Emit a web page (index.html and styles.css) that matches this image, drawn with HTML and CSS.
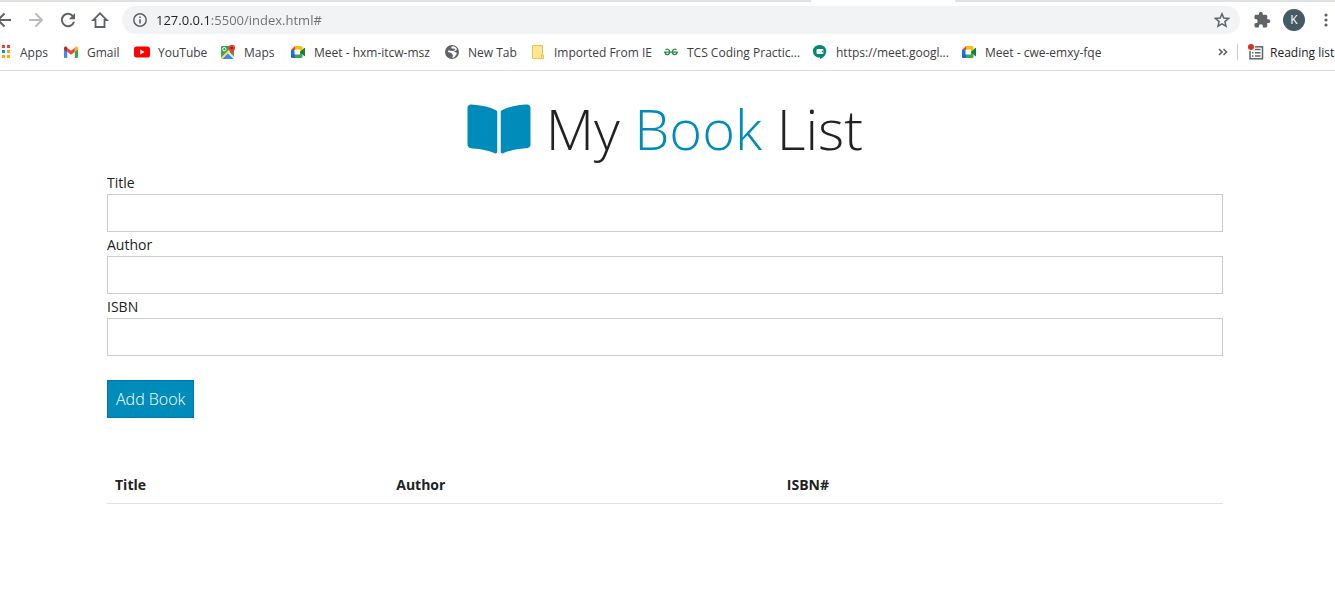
FILE: index.html
```html
<!DOCTYPE html>
<html lang="en">
<head>
<meta charset="utf-8">
<title>My Book List</title>
<link rel="stylesheet" href="styles.css">
</head>
<body>
<svg class="sprite" aria-hidden="true">
  <symbol id="meet" viewBox="0 0 16 14">
    <path fill="#ea4335" d="M1 5 5 1v4z"/>
    <path fill="#fbbc04" d="M5 1h6q1.500 0 1.500 1.500V6L10 7V4.500H5z"/>
    <path fill="#1a73e8" d="M1 5h3.500v5H1z"/>
    <path fill="#1967d2" d="M1 9.500h4V13H2q-1 0-1-1z"/>
    <path fill="#34a853" d="M5 9.500h5V7l2.500-2v6.500q0 1.500-1.500 1.500H5z"/>
    <path fill="#188038" d="m10 7 4.200-4q.8-.5.8.4v7.200q0 .9-.8.400z"/>
  </symbol>
</svg>
<header class="browser">
  <div class="tabs"><span class="tab-active"></span></div>
  <div class="toolbar">
    <button class="tool" aria-label="Back"><svg width="16" height="16" viewBox="0 0 16 16" fill="none" stroke="#5f6368" stroke-width="2"><path d="M15 8H2M8.500 1.500 2 8l6.500 6.500"/></svg></button>
    <button class="tool" aria-label="Forward"><svg width="16" height="16" viewBox="0 0 16 16" fill="none" stroke="#babcbe" stroke-width="2"><path d="M1 8h13M7.500 1.500 14 8l-6.500 6.500"/></svg></button>
    <button class="tool" aria-label="Reload"><svg width="16" height="16" viewBox="0 0 16 16"><path d="M13.200 4.500A6.200 6.200 0 1 0 14 9.700" fill="none" stroke="#5f6368" stroke-width="2"/><path d="M15 1v6.200H8.800z" fill="#5f6368"/></svg></button>
    <button class="tool" aria-label="Home"><svg width="18" height="18" viewBox="0 0 18 18" fill="none" stroke="#5f6368" stroke-width="1.800"><path d="M4.500 9H2.200L9 2.300 15.800 9h-2.300v7h-9z"/></svg></button>
    <div class="address">
      <svg width="14" height="14" viewBox="0 0 14 14"><circle cx="7" cy="7" r="6.200" fill="none" stroke="#5f6368" stroke-width="1.500"/><path d="M6.200 6.200h1.600v4.300H6.200zM6.200 3.400h1.600V5H6.200z" fill="#5f6368"/></svg>
      <input class="url" type="text" aria-label="Address" value="127.0.0.1:5500/index.html#">
      <button class="star" aria-label="Bookmark this page"><svg width="16" height="16" viewBox="0 0 16 16" fill="none" stroke="#5f6368" stroke-width="1.500"><path d="m8 1.800 1.800 4.300 4.700.4-3.600 3.100 1.100 4.600L8 11.800l-4 2.400 1.100-4.600-3.600-3.100 4.700-.4z"/></svg></button>
    </div>
    <button class="tool" aria-label="Extensions"><svg width="18" height="18" viewBox="0 0 24 24" fill="#5f6368"><path d="M20.500 11H19V7c0-1.100-.9-2-2-2h-4V3.500a2.500 2.500 0 0 0-5 0V5H4c-1.100 0-2 .9-2 2v3.800h1.500a2.700 2.700 0 0 1 0 5.400H2V20c0 1.100.9 2 2 2h3.800v-1.500a2.700 2.700 0 0 1 5.400 0V22H17c1.100 0 2-.9 2-2v-4h1.500a2.500 2.500 0 0 0 0-5z"/></svg></button>
    <button class="tool" aria-label="Profile"><span class="avatar">K</span></button>
    <button class="tool" aria-label="Menu"><svg width="16" height="16" viewBox="0 0 16 16" fill="#5f6368"><circle cx="8" cy="3" r="1.600"/><circle cx="8" cy="8" r="1.600"/><circle cx="8" cy="13" r="1.600"/></svg></button>
  </div>
  <nav class="bookmarks">
    <div class="links">
      <a href="#"><svg width="16" height="16" viewBox="0 0 16 16"><path fill="#ea4335" d="M1 1h3v3H1zM6 1h3v3H6zM11 1h3v3h-3z"/><path fill="#1a84ff" d="M6 6h3v3H6z"/><path fill="#34a853" d="M1 6h3v3H1z"/><path fill="#fbab00" d="M11 6h3v3h-3zM1 11h3v3H1zM6 11h3v3H6zM11 11h3v3h-3z"/></svg>Apps</a>
      <a href="#"><svg width="16" height="16" viewBox="0 0 16 16"><path fill="#4285f4" d="M1 4.500 4.200 7v7H2q-1 0-1-1z"/><path fill="#34a853" d="M15 4.500 11.800 7v7H14q1 0 1-1z"/><path fill="#ea4335" d="M4.200 3.800 8 6.700l3.800-2.900v4L8 10.700 4.200 7.800z"/><path fill="#c5221f" d="M1 4.200c0-1.700 1.700-2.200 2.700-1.400l.5.400v4.600L1 5.500z"/><path fill="#fbbc04" d="M15 4.200c0-1.700-1.700-2.200-2.700-1.400l-.5.400v4.600L15 5.500z"/></svg>Gmail</a>
      <a href="#"><svg width="16" height="16" viewBox="0 0 16 16"><rect y="2.500" width="16" height="11" rx="2.500" fill="#f00"/><path d="m6.300 5.500 4.300 2.500-4.300 2.500z" fill="#fff"/></svg>YouTube</a>
      <a href="#"><svg width="16" height="16" viewBox="0 0 16 16"><rect x="1" y="2" width="13" height="13" rx="1" fill="#34a853"/><path d="m2 15 5.500-5.500L13 15z" fill="#4285f4"/><path d="M1 13.500 12 2.500l2 2L3.500 15H1z" fill="#fdd663"/><path d="m2.500 15 5.500-5.500 5.500 5.500z" fill="#4285f4"/><path d="m8 9.500 1.500-1.500L14 12.500V15h-.5z" fill="#e8eaed"/><circle cx="4.300" cy="5.200" r="1.700" fill="none" stroke="#fff" stroke-width="1"/><path d="M11.700 10.500C11.200 8 8.500 7 8.500 4a3.300 3.300 0 0 1 6.600 0c0 3-2.900 4-3.400 6.500z" fill="#ea4335"/><circle cx="11.800" cy="4" r="1.200" fill="#8c1d18"/></svg>Maps</a>
      <a href="#"><svg width="16" height="14"><use href="#meet"/></svg>Meet - hxm-itcw-msz</a>
      <a href="#"><svg width="16" height="16" viewBox="0 0 16 16"><circle cx="8" cy="8" r="7" fill="#5f6368"/><path d="M9.500 2.200C7 2 6.500 4 8 4.500l3 .2c1 1-1 2.300-2.500 2.300-2 0-3-.6-4.500-.3-.6 1.700 1.300 1.800 2.800 2 1.200.2.7 1.500 1.700 1.900.8.300.5 1.700-.5 3.300 3-.3 3.500-2.400 4.700-4.200.8-1.400-2-1.700-3.200-2 1.500-.6 3-1.400 3.500-2.500-.6-1.500-2-2.700-3.500-3z" fill="#fff"/></svg>New Tab</a>
      <a href="#"><svg width="16" height="16" viewBox="0 0 16 16"><path d="M2.500 1.500h10v9.500h-1v3.500h-9z" fill="#ffe694" stroke="#e8c44e"/><path d="M11.500 11h2v3.500h-2z" fill="#ffe694" stroke="#e8c44e"/></svg>Imported From IE</a>
      <a href="#"><svg width="16" height="16" viewBox="0 0 16 16" fill="none" stroke="#2f8d46" stroke-width="1.300"><path d="M1 8.200h14M2.500 5.700C4.500 4.600 6.700 5.500 6.700 8c0 3.200-4 3.500-4.900.3M13.500 5.700C11.500 4.600 9.300 5.500 9.300 8c0 3.200 4 3.500 4.900.3"/></svg>TCS Coding Practic...</a>
      <a href="#"><svg width="16" height="16" viewBox="0 0 16 16"><path d="M8 1a6.300 6.300 0 0 1 6.300 6.300c0 3-2.300 6-6.300 8v-1.800A6.300 6.300 0 1 1 8 1z" fill="#00897b"/><rect x="4.500" y="5" width="7" height="5" rx="1" fill="#fff"/><path d="m9.500 7.500 2-1.600v3.200z" fill="#00897b"/></svg>https://meet.googl...</a>
      <a href="#"><svg width="16" height="14"><use href="#meet"/></svg>Meet - cwe-emxy-fqe</a>
    </div>
    <button class="more" aria-label="More bookmarks"><svg width="10" height="8" viewBox="0 0 10 8" fill="none" stroke="#5f6368" stroke-width="1.600"><path d="m1 1 3 3-3 3M5.500 1l3 3-3 3"/></svg></button>
    <button class="reading"><svg width="16" height="16" viewBox="0 0 16 16"><rect x="2" y="2.800" width="12.500" height="12" fill="none" stroke="#5f6368" stroke-width="1.500"/><path d="M4 5.500h1.500M4 8.700h1.500M4 12h1.500M7 5.500h5.500M7 8.700h5.500M7 12h5.500" stroke="#5f6368" stroke-width="1.500"/><circle cx="3" cy="3" r="4" fill="#fff"/><circle cx="3" cy="3" r="3" fill="#d93025"/></svg>Reading list</button>
  </nav>
</header>
<main class="page">
  <div class="container">
    <h1 class="heading"><svg class="book" viewBox="0 0 576 512" fill="currentColor" aria-hidden="true"><path d="M542.220 32.050c-54.800 3.110-163.720 14.430-230.960 55.590-4.640 2.840-7.270 7.890-7.270 13.170v363.870c0 11.550 12.630 18.850 23.280 13.490 69.180-34.820 169.230-44.320 218.700-46.920 16.890-.89 30.020-14.430 30.020-30.660V62.750c.01-17.710-15.350-31.740-33.770-30.700zM264.730 87.640C197.500 46.480 88.580 35.170 33.780 32.050 15.360 31.010 0 45.040 0 62.750V400.600c0 16.240 13.130 29.780 30.020 30.660 49.490 2.600 149.590 12.110 218.770 46.950 10.620 5.350 23.210-1.940 23.210-13.460V100.630c0-5.290-2.620-10.140-7.270-12.990z"/></svg> My <span class="accent">Book</span> List</h1>
    <form class="form">
      <label for="title">Title</label>
      <input type="text" id="title">
      <label for="author">Author</label>
      <input type="text" id="author">
      <label for="isbn">ISBN</label>
      <input type="text" id="isbn">
      <button class="add" type="button">Add Book</button>
    </form>
    <table class="books">
      <thead><tr><th class="col-title">Title</th><th class="col-author">Author</th><th>ISBN#</th></tr></thead>
      <tbody></tbody>
    </table>
  </div>
</main>
</body>
</html>
```
FILE: styles.css
```css
*, *::before, *::after { box-sizing: border-box; }
body {
  margin: 0;
  background: #fff;
  color: #222;
  font-family: "Open Sans", sans-serif;
  font-size: 14px;
}
button { border: 0; padding: 0; background: none; font: inherit; color: inherit; }
svg { flex: none; }
.sprite { display: none; }

.browser { overflow: hidden; border-bottom: 1px solid #d9dbde; }
.tabs { display: flex; height: 2px; background: #dee1e6; }
.tab-active { width: 144px; margin-left: 811px; background: #fff; }
.toolbar {
  display: flex;
  align-items: center;
  height: 36px;
  margin: 0 -7px 0 -12px;
}
.tool { display: flex; flex: none; align-items: center; justify-content: center; width: 32px; height: 28px; }
.address {
  display: flex;
  flex: 1;
  align-items: center;
  gap: 9px;
  height: 28px;
  margin: 0 6px;
  padding: 0 10px 0 11px;
  border-radius: 14px;
  background: #f1f3f4;
}
.url {
  flex: 1;
  min-width: 0;
  padding: 0;
  border: 0;
  outline: 0;
  font: 13px/20px "Open Sans", sans-serif;
  color: transparent;
  background: linear-gradient(90deg, #202124 54px, #6b6f73 54px);
  -webkit-background-clip: text;
  background-clip: text;
}
.star { display: flex; }
.avatar {
  width: 22px;
  height: 22px;
  border-radius: 50%;
  background: #455a64;
  color: #fff;
  font-size: 12px;
  line-height: 22px;
  text-align: center;
}

.bookmarks {
  display: flex;
  align-items: center;
  height: 32px;
  padding-bottom: 4px;
  font-size: 12px;
  color: #3c4043;
  white-space: nowrap;
}
.links {
  display: grid;
  flex: 1;
  grid-template-columns: 67px 71px 86px 70px 154px 86px 133px 149px 149px 1fr;
  margin-left: -4px;
}
.links a { display: flex; align-items: center; gap: 8px; color: inherit; text-decoration: none; }
.more { display: flex; padding-right: 9px; }
.reading {
  display: flex;
  align-items: center;
  gap: 6px;
  height: 16px;
  width: 98px;
  padding-left: 10px;
  border-left: 1px solid #c8cacd;
  color: #202124;
}

.page { padding-right: 5px; }
.container { max-width: 1140px; margin: 0 auto; padding: 24px 12px; }
.heading {
  margin: 0 0 8px;
  font-size: 56px;
  font-weight: 300;
  line-height: 67px;
  text-align: center;
}
.book { width: 64px; height: 56px; vertical-align: -7px; color: #008cba; }
.accent { color: #008cba; }
.form { display: flex; flex-direction: column; align-items: flex-start; }
.form label { padding-top: 2px; line-height: 22px; }
.form input {
  width: 100%;
  height: 38px;
  padding: 6px 12px;
  border: 1px solid #ccc;
  font: inherit;
}
.add {
  margin-top: 24px;
  padding: 6px 8px;
  border: 1px solid #0079a1;
  background: #008cba;
  color: #fff;
  font-size: 16px;
  font-weight: 300;
  line-height: 24px;
}
.books { width: 100%; margin-top: 48px; border-collapse: collapse; table-layout: fixed; }
.books th {
  padding: 8px;
  border-bottom: 1px solid #dee2e6;
  line-height: 21px;
  text-align: left;
  font-weight: 700;
}
.col-title { width: 25.2%; }
.col-author { width: 35%; }
```
